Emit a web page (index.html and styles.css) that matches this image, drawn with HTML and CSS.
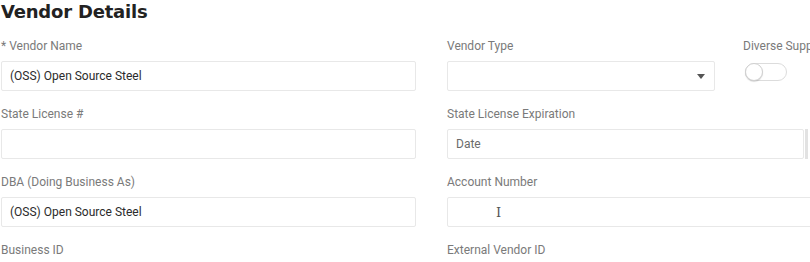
FILE: index.html
```html
<!DOCTYPE html>
<html lang="en">
  <head>
    <meta charset="UTF-8" />
    <meta name="viewport" content="width=device-width, initial-scale=1.0" />
    <title>Vendor Details</title>
    <link rel="stylesheet" href="styles.css">
  </head>
  <body>
    <div class="page">
      <h2 class="title">Vendor Details</h2>

      <div class="row">
        <div class="field">
          <label class="label">* Vendor Name</label>
          <div class="input filled">(OSS) Open Source Steel</div>
        </div>
        <div class="split">
          <div class="field type-field">
            <label class="label">Vendor Type</label>
            <div class="input select"><span class="caret"></span></div>
          </div>
          <div class="field">
            <label class="label">Diverse Supp</label>
            <span class="toggle"><span class="knob"></span></span>
          </div>
        </div>
      </div>

      <div class="row">
        <div class="field">
          <label class="label">State License #</label>
          <div class="input"></div>
        </div>
        <div class="field">
          <label class="label">State License Expiration</label>
          <div class="input-group">
            <div class="input placeholder">Date</div>
            <span class="addon"></span>
          </div>
        </div>
      </div>

      <div class="row">
        <div class="field">
          <label class="label">DBA (Doing Business As)</label>
          <div class="input filled">(OSS) Open Source Steel</div>
        </div>
        <div class="field">
          <label class="label">Account Number</label>
          <div class="input"><span class="ibeam">I</span></div>
        </div>
      </div>

      <div class="row">
        <div class="field">
          <label class="label">Business ID</label>
        </div>
        <div class="field">
          <label class="label">External Vendor ID</label>
        </div>
      </div>
    </div>
  </body>
</html>
```

FILE: styles.css
```css
html,
body {
  margin: 0;
  padding: 0;
  background: #ffffff;
  overflow: hidden;
}
.page {
  width: 860px;
  padding: 0 0 0 1px;
  font-family: Roboto, "Liberation Sans", sans-serif;
}
.title {
  margin: 0 0 14px 0;
  font-family: "DejaVu Sans", sans-serif;
  font-weight: bold;
  font-size: 18px;
  line-height: 24px;
  color: #222222;
  letter-spacing: -0.2px;
}
.row {
  display: grid;
  grid-template-columns: 415px 1fr;
  column-gap: 31px;
  margin-bottom: 15px;
}
.split {
  display: flex;
  gap: 28px;
}
.type-field {
  width: 268px;
}
.field {
  display: flex;
  flex-direction: column;
}
.label {
  font-size: 12px;
  line-height: 16px;
  color: #7a7a7a;
  margin-bottom: 7px;
  white-space: nowrap;
}
.input {
  box-sizing: border-box;
  height: 30px;
  border: 1px solid #e8e8e8;
  border-radius: 2px;
  padding: 0 8px;
  font-size: 12px;
  line-height: 28px;
  color: #2b2b2b;
  position: relative;
}
.placeholder {
  color: #6b6b6b;
  flex: 1;
}
.select .caret {
  position: absolute;
  right: 9px;
  top: 12px;
  border-left: 4px solid transparent;
  border-right: 4px solid transparent;
  border-top: 5px solid #555555;
}
.input-group {
  display: flex;
  width: 390px;
}
.addon {
  width: 32px;
  height: 30px;
  box-sizing: border-box;
  border-left: 3px solid #e2e2e2;
  margin-left: 1px;
}
.toggle {
  display: block;
  position: relative;
  width: 40px;
  height: 16px;
  margin: 2px 0 0 2px;
  border: 1px solid #dcdcdc;
  border-radius: 9px;
  background: #ffffff;
}
.knob {
  position: absolute;
  left: -1px;
  top: -1px;
  width: 16px;
  height: 16px;
  border: 1px solid #d0d0d0;
  border-radius: 50%;
  background: #ffffff;
  box-shadow: 0 1px 1px rgba(0, 0, 0, 0.15);
}
.ibeam {
  position: absolute;
  left: 48px;
  top: 8px;
  font-family: "DejaVu Serif", serif;
  font-size: 13px;
  line-height: 14px;
  color: #555555;
}
```
